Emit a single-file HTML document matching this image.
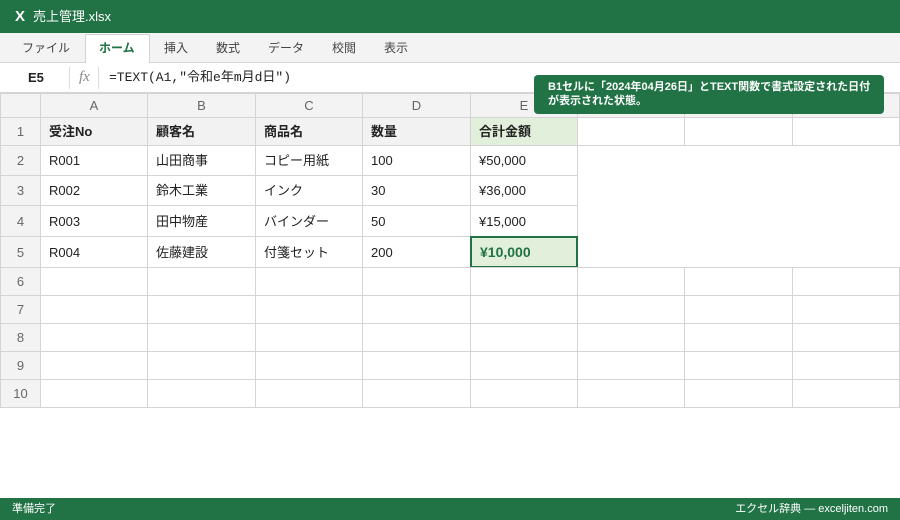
<!DOCTYPE html>
<html><head><meta charset="utf-8"><style>
*{margin:0;padding:0;box-sizing:border-box}
body{width:900px;height:520px;overflow:hidden;background:#fff;font-family:"Liberation Sans","Noto Sans CJK JP",sans-serif;position:relative;color:#222}
.a{position:absolute}
.c{position:absolute;border:1px solid #d4d4d4;font-size:13px;line-height:1;display:flex;align-items:center;padding-left:8px;background:#fff}
.h{background:#f3f3f3;color:#666;justify-content:center;padding-left:0}
.b{font-weight:bold;background:#f2f2f2}
</style></head><body>
<div class="a" style="left:0;top:0;width:900px;height:33px;background:#217346;color:#fff;font-size:13px;line-height:33px;padding-left:15px"><b style="font-size:15px;margin-right:8px">X</b>売上管理.xlsx</div>
<div class="a" style="left:0;top:33px;width:900px;height:30px;background:#f3f3f3;border-bottom:1px solid #d4d4d4"></div>
<div class="a" style="left:85px;top:34px;width:65px;height:30px;background:#fff;border:1px solid #d4d4d4;border-bottom:none"></div>
<div class="a" style="top:33px;height:30px;line-height:30px;font-size:12px;color:#444;width:900px">
<span class="a" style="left:22px">ファイル</span><span class="a" style="left:99px;color:#217346;font-weight:bold">ホーム</span><span class="a" style="left:164px">挿入</span><span class="a" style="left:216px">数式</span><span class="a" style="left:268px">データ</span><span class="a" style="left:332px">校閲</span><span class="a" style="left:384px">表示</span></div>
<div class="a" style="left:0;top:63px;width:900px;height:30px;background:#fff;border-bottom:1px solid #d4d4d4;font-size:13px;line-height:29px">
<span class="a" style="left:28px;font-weight:bold">E5</span>
<div class="a" style="left:69px;top:4px;width:1px;height:22px;background:#ddd"></div>
<span class="a" style="left:79px;color:#888;font-style:italic;font-family:'Liberation Serif',serif;font-size:15px">fx</span>
<div class="a" style="left:98px;top:4px;width:1px;height:22px;background:#ddd"></div>
<span class="a" style="left:109px;font-family:'Liberation Mono','Noto Sans CJK JP',monospace">=TEXT(A1,"令和e年m月d日")</span></div>

<div class="c h" style="left:0;top:93px;width:41px;height:25px"></div>
<div class="c h" style="left:40px;top:93px;width:108px;height:25px">A</div>
<div class="c h" style="left:147px;top:93px;width:109px;height:25px">B</div>
<div class="c h" style="left:255px;top:93px;width:108px;height:25px">C</div>
<div class="c h" style="left:362px;top:93px;width:109px;height:25px">D</div>
<div class="c h" style="left:470px;top:93px;width:108px;height:25px">E</div>
<div class="c h" style="left:577px;top:93px;width:108px;height:25px">F</div>
<div class="c h" style="left:684px;top:93px;width:109px;height:25px">G</div>
<div class="c h" style="left:792px;top:93px;width:108px;height:25px">H</div>

<div class="c h" style="left:0;top:117px;width:41px;height:29px">1</div>
<div class="c b" style="left:40px;top:117px;width:108px;height:29px">受注No</div>
<div class="c b" style="left:147px;top:117px;width:109px;height:29px">顧客名</div>
<div class="c b" style="left:255px;top:117px;width:108px;height:29px">商品名</div>
<div class="c b" style="left:362px;top:117px;width:109px;height:29px">数量</div>
<div class="c b" style="left:470px;top:117px;width:108px;height:29px;background:#e2efda">合計金額</div>
<div class="c" style="left:577px;top:117px;width:108px;height:29px"></div>
<div class="c" style="left:684px;top:117px;width:109px;height:29px"></div>
<div class="c" style="left:792px;top:117px;width:108px;height:29px"></div>

<div class="c h" style="left:0;top:145px;width:41px;height:31px">2</div>
<div class="c" style="left:40px;top:145px;width:108px;height:31px">R001</div>
<div class="c" style="left:147px;top:145px;width:109px;height:31px">山田商事</div>
<div class="c" style="left:255px;top:145px;width:108px;height:31px">コピー用紙</div>
<div class="c" style="left:362px;top:145px;width:109px;height:31px">100</div>
<div class="c" style="left:470px;top:145px;width:108px;height:31px">¥50,000</div>

<div class="c h" style="left:0;top:175px;width:41px;height:31px">3</div>
<div class="c" style="left:40px;top:175px;width:108px;height:31px">R002</div>
<div class="c" style="left:147px;top:175px;width:109px;height:31px">鈴木工業</div>
<div class="c" style="left:255px;top:175px;width:108px;height:31px">インク</div>
<div class="c" style="left:362px;top:175px;width:109px;height:31px">30</div>
<div class="c" style="left:470px;top:175px;width:108px;height:31px">¥36,000</div>

<div class="c h" style="left:0;top:205px;width:41px;height:32px">4</div>
<div class="c" style="left:40px;top:205px;width:108px;height:32px">R003</div>
<div class="c" style="left:147px;top:205px;width:109px;height:32px">田中物産</div>
<div class="c" style="left:255px;top:205px;width:108px;height:32px">バインダー</div>
<div class="c" style="left:362px;top:205px;width:109px;height:32px">50</div>
<div class="c" style="left:470px;top:205px;width:108px;height:32px">¥15,000</div>

<div class="c h" style="left:0;top:236px;width:41px;height:32px">5</div>
<div class="c" style="left:40px;top:236px;width:108px;height:32px">R004</div>
<div class="c" style="left:147px;top:236px;width:109px;height:32px">佐藤建設</div>
<div class="c" style="left:255px;top:236px;width:108px;height:32px">付箋セット</div>
<div class="c" style="left:362px;top:236px;width:109px;height:32px">200</div>
<div class="c" style="left:470px;top:236px;width:108px;height:32px;border:2px solid #217346;background:#e2efda;color:#217346;font-weight:bold;font-size:14px">¥10,000</div>

<div class="c h" style="left:0;top:267px;width:41px;height:29px">6</div>
<div class="c h" style="left:0;top:295px;width:41px;height:29px">7</div>
<div class="c h" style="left:0;top:323px;width:41px;height:29px">8</div>
<div class="c h" style="left:0;top:351px;width:41px;height:29px">9</div>
<div class="c h" style="left:0;top:379px;width:41px;height:29px">10</div>
<svg class="a" style="left:40px;top:267px" width="861" height="141">
<g stroke="#d4d4d4" stroke-width="1" fill="none">
<path d="M0 0.5H860M0 28.5H860M0 56.5H860M0 84.5H860M0 112.5H860M0 140.5H860"/>
<path d="M0.5 0V141M107.5 0V141M215.5 0V141M322.5 0V141M430.5 0V141M537.5 0V141M644.5 0V141M752.5 0V141M859.5 0V141"/>
</g></svg>

<div class="a" style="left:534px;top:75px;width:350px;height:39px;background:#217346;border-radius:4px;color:#fff;font-size:11px;font-weight:bold;line-height:14px;padding:5px 0 0 14px">B1セルに「2024年04月26日」とTEXT関数で書式設定された日付<br>が表示された状態。</div>

<div class="a" style="left:0;top:498px;width:900px;height:22px;background:#217346;color:#fff;font-size:11px;line-height:22px">
<span class="a" style="left:12px">準備完了</span><span class="a" style="right:12px">エクセル辞典 — exceljiten.com</span></div>
</body></html>
